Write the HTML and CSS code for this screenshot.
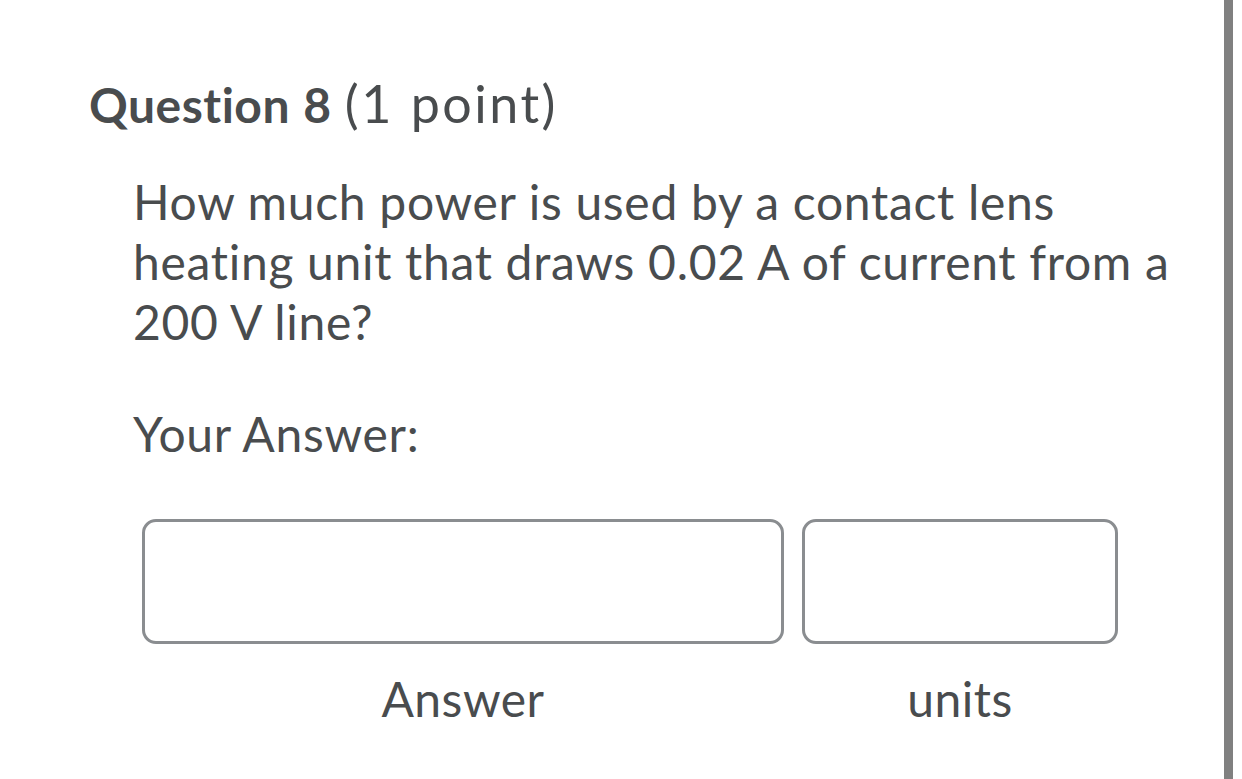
FILE: index.html
```html
<!DOCTYPE html>
<html>
<head>
<meta charset="utf-8">
<link rel="stylesheet" href="styles.css">
</head>
<body>
<div class="page">
  <main class="content">
    <h2 class="q-title"><span class="q-num">Question 8</span> <span class="q-pts">(1 point)</span></h2>
    <div class="q-body">
      <p class="q-text">How much power is used by a contact lens heating unit that draws 0.02 A of current from a 200 V line?</p>
      <p class="q-label">Your Answer:</p>
      <div class="answer-row">
        <div class="field field-answer">
          <div class="input"></div>
          <div class="field-label">Answer</div>
        </div>
        <div class="field field-units">
          <div class="input"></div>
          <div class="field-label">units</div>
        </div>
      </div>
    </div>
  </main>
  <div class="scrollbar"></div>
</div>
</body>
</html>
```

FILE: styles.css
```css
html, body {
  margin: 0;
  padding: 0;
  background: #ffffff;
}
body {
  font-family: Lato, "Open Sans", sans-serif;
  font-variant-ligatures: none;
  color: #494c4e;
  width: 1242px;
  height: 779px;
  overflow: hidden;
}
.page {
  display: flex;
  height: 779px;
}
.content {
  flex: 1;
  padding: 75px 0 0 89px;
}
.scrollbar {
  width: 9px;
  background: #808080;
  margin-right: 9px;
}
.q-title {
  margin: 0;
  font-weight: 400;
  font-size: 48px;
  line-height: 60px;
  color: #494c4e;
  white-space: nowrap;
  word-spacing: 1px;
}
.q-num {
  font-weight: 700;
  letter-spacing: 0.5px;
}
.q-pts {
  font-size: 52px;
  line-height: 40px;
  letter-spacing: 2.5px;
}
.q-body {
  padding: 37px 0 0 44px;
  width: 1057px;
}
.q-text {
  margin: 0;
  font-size: 48px;
  line-height: 60px;
  letter-spacing: 0.7px;
}
.q-label {
  margin: 52px 0 0 0;
  font-size: 48px;
  line-height: 60px;
  letter-spacing: 0.7px;
}
.answer-row {
  display: flex;
  gap: 18px;
  margin: 55px 0 0 9px;
}
.field {
  display: flex;
  flex-direction: column;
  align-items: center;
}
.input {
  box-sizing: border-box;
  height: 125px;
  border: 3px solid #8a8d90;
  border-radius: 14px;
  background: #fff;
  width: 100%;
}
.field-answer {
  width: 642px;
}
.field-units {
  width: 316px;
}
.field-label {
  font-size: 48px;
  line-height: 60px;
  letter-spacing: 0.5px;
  margin-top: 25px;
}
```
